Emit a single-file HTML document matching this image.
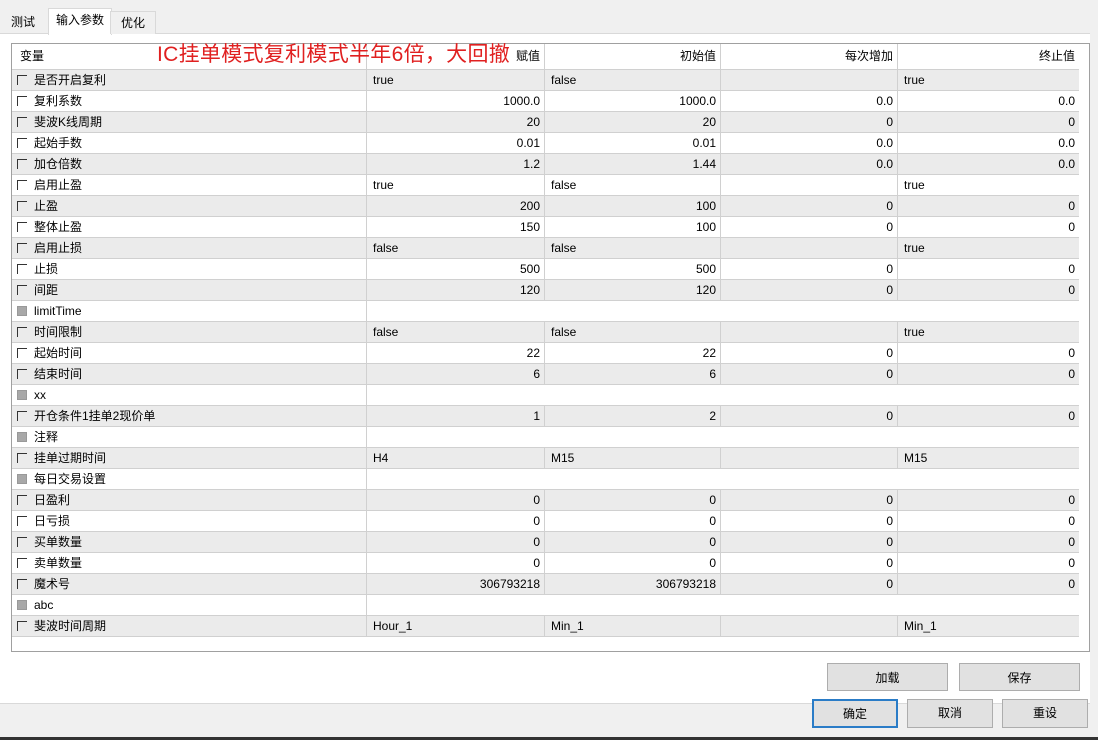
<!DOCTYPE html><html><head><meta charset="utf-8"><style>
body{margin:0;width:1098px;height:740px;background:#f0f0f0;font-family:"Liberation Sans","Noto Sans CJK SC",sans-serif;font-size:12px;color:#000;position:relative;overflow:hidden}
.a{position:absolute}
.tab{position:absolute;top:11px;height:22px;line-height:22px;font-size:12px;text-align:center;border:1px solid #d9d9d9;border-bottom:none;background:#f0f0f0}
.box{position:absolute;left:11px;top:43px;width:1077px;height:607px;border:1px solid #a0a0a0;background:#fff}
.row{position:absolute;left:0;width:1067px;height:21px;border-bottom:1px solid #d0d0d0;box-sizing:border-box}
.g{background:#ebebeb}
.c{position:absolute;top:0;height:20px;line-height:20px;border-right:1px solid #d0d0d0;box-sizing:border-box;padding:0 4px;white-space:nowrap}
.r{text-align:right}
.cb{position:absolute;left:5px;top:5px;width:10px;height:10px;border-left:1px solid #333;border-top:1px solid #333;box-sizing:border-box}
.cbg{background:#a8a8a8;border:1px solid #999}
.btn{position:absolute;height:26px;line-height:26px;text-align:center;background:#e1e1e1;border:1px solid #adadad;box-sizing:border-box;font-size:12px}
</style></head><body>
<div class="a" style="left:0;top:33px;width:1090px;height:670px;background:#fff;border-top:1px solid #d9d9d9"></div>
<div class="tab" style="left:0;width:46px;border:none;background:#f0f0f0">测试</div>
<div class="tab" style="left:48px;width:62px;top:8px;height:26px;background:#fff">输入参数</div>
<div class="tab" style="left:110px;width:44px">优化</div>
<div class="box" id="b">
<div class="row" style="top:0;height:26px;background:#fff"><div class="c" style="left:0;width:355px;height:25px;line-height:25px;padding-left:8px">变量</div><div class="c r" style="left:355px;width:178px;height:25px;line-height:25px">赋值</div><div class="c r" style="left:533px;width:176px;height:25px;line-height:25px">初始值</div><div class="c r" style="left:709px;width:177px;height:25px;line-height:25px">每次增加</div><div class="c r" style="left:886px;width:181px;height:25px;line-height:25px;border-right:none">终止值</div></div>
<div class="a" style="left:145px;top:-6px;color:#e02020;font-size:21px;letter-spacing:0.3px;background:transparent">IC挂单模式复利模式半年6倍，大回撤</div>
</div>
<div class="btn" style="left:827px;top:663px;width:121px;height:28px;line-height:28px">加载</div>
<div class="btn" style="left:959px;top:663px;width:121px;height:28px;line-height:28px">保存</div>
<div class="a" style="left:0;top:703px;width:1090px;height:1px;background:#d9d9d9"></div>
<div class="btn" style="left:812px;top:699px;width:86px;height:29px;line-height:27px;border:2px solid #2a7cc7">确定</div>
<div class="btn" style="left:907px;top:699px;width:86px;height:29px;line-height:27px">取消</div>
<div class="btn" style="left:1002px;top:699px;width:86px;height:29px;line-height:27px">重设</div>
<div class="a" style="left:0;top:737px;width:1098px;height:3px;background:#333"></div>
<script>
var d=[["是否开启复利","true","false","","true",0],["复利系数","1000.0","1000.0","0.0","0.0",1],["斐波K线周期","20","20","0","0",1],["起始手数","0.01","0.01","0.0","0.0",1],["加仓倍数","1.2","1.44","0.0","0.0",1],["启用止盈","true","false","","true",0],["止盈","200","100","0","0",1],["整体止盈","150","100","0","0",1],["启用止损","false","false","","true",0],["止损","500","500","0","0",1],["间距","120","120","0","0",1],["limitTime",null],["时间限制","false","false","","true",0],["起始时间","22","22","0","0",1],["结束时间","6","6","0","0",1],["xx",null],["开仓条件1挂单2现价单","1","2","0","0",1],["注释",null],["挂单过期时间","H4","M15","","M15",0],["每日交易设置",null],["日盈利","0","0","0","0",1],["日亏损","0","0","0","0",1],["买单数量","0","0","0","0",1],["卖单数量","0","0","0","0",1],["魔术号","306793218","306793218","0","0",1],["abc",null],["斐波时间周期","Hour_1","Min_1","","Min_1",0]];
var h="";d.forEach(function(r,i){var t=26+i*21;h+='<div class="row'+(i%2==0?' g':'')+'" style="top:'+t+'px">';
h+='<div class="c" style="left:0;width:355px;padding-left:22px"><div class="cb'+(r[1]===null?' cbg':'')+'"></div>'+r[0]+'</div>';
if(r[1]===null){h+='</div>';return;}
var L=[355,533,709,886],W=[178,176,177,181];
for(var k=0;k<4;k++){h+='<div class="c'+(r[5]?' r':'')+'" style="left:'+L[k]+'px;width:'+W[k]+'px;padding-left:6px'+(k==3?';border-right:none':'')+'">'+r[k+1]+'</div>';}
h+='</div>';});
document.getElementById('b').insertAdjacentHTML('beforeend',h);
</script>
</body></html>
